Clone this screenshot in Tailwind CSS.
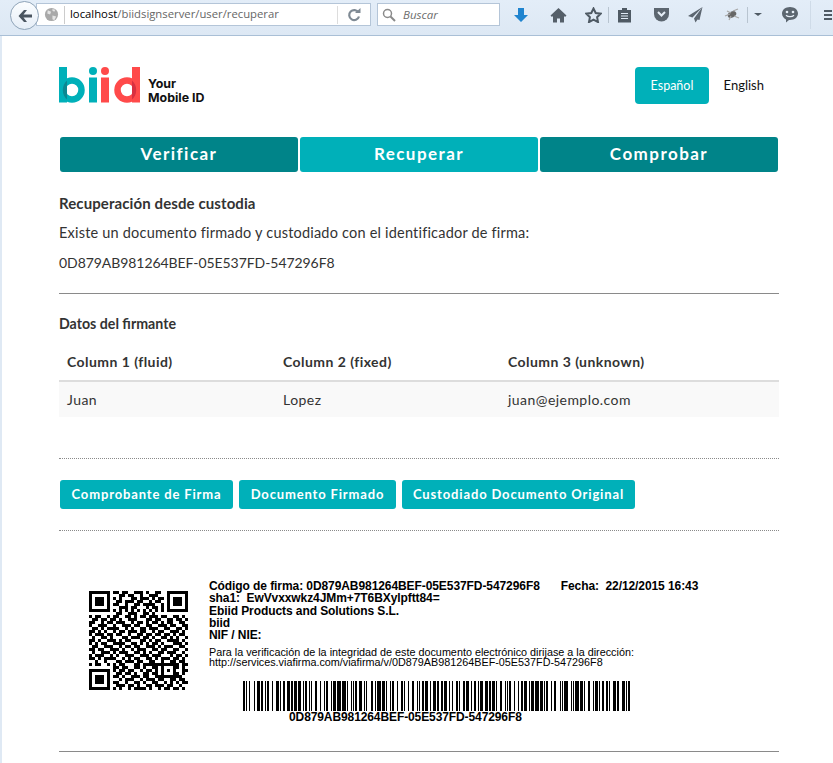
<!DOCTYPE html>
<html lang="es">
<head>
<meta charset="utf-8">
<title>biid</title>
<script src="https://cdn.jsdelivr.net/npm/@tailwindcss/browser@4"></script>
</head>
<body class="bg-white h-[763px] w-[833px] overflow-hidden font-['Lato',sans-serif] text-[#222]">
<!-- browser toolbar -->
<div class="h-[36px] w-[833px] flex items-center bg-gradient-to-b from-[#e3edf8] to-[#dde8f4] border-b border-[#a9bfd6] relative overflow-hidden">
  <div class="absolute left-[10px] top-[1px] w-[29px] h-[29px] rounded-full bg-gradient-to-b from-[#fbfdff] to-[#e6eef7] border border-[#8ea3b8] flex items-center justify-center z-10">
    <svg width="16" height="14" viewBox="0 0 16 14"><path d="M7 1 1.5 7 7 13h3L6.5 8.6H15V5.4H6.5L10 1z" fill="#4a5560"/></svg>
  </div>
  <div class="ml-[36px] mt-[-6px] w-[335px] h-[23px] shrink-0 bg-white border border-[#b4c5d8] flex items-center">
    <svg class="ml-[7px]" width="15" height="15" viewBox="0 0 16 16"><circle cx="8" cy="8" r="7" fill="#a9a9a9"/><path d="M4 3.5 7.5 5 6.5 8 3.5 7zM9 9l4 1-2 4-2-1zM9 2l3 1-1 2-2-1z" fill="#e4e4e4"/></svg>
    <span class="ml-[5px] w-px h-[18px] bg-[#ccc]"></span>
    <span class="ml-[5px] text-[11.300px] font-['Open_Sans'] text-[#666]"><span class="text-black">localhost</span>/biidsignserver/user/recuperar</span>
    <span class="ml-auto w-px h-[18px] bg-[#ddd]"></span>
    <svg class="mx-[9px]" width="14" height="14" viewBox="0 0 14 14"><path d="M11.5 4.5A5 5 0 1 0 12 8.5" fill="none" stroke="#7f8a94" stroke-width="2.2"/><path d="M8 5h5.500V0z" fill="#7f8a94"/></svg>
  </div>
  <div class="ml-[6px] mt-[-6px] w-[123px] h-[23px] shrink-0 bg-white border border-[#b4c5d8] flex items-center">
    <svg class="ml-[4px]" width="14" height="14" viewBox="0 0 14 14"><circle cx="5.500" cy="5.500" r="4" fill="none" stroke="#8a8a8a" stroke-width="1.500"/><path d="m8.500 8.500 4.500 4.500" stroke="#8a8a8a" stroke-width="2"/></svg>
    <span class="ml-[7px] text-[11.500px] italic font-['Open_Sans'] text-[#6d6d6d]">Buscar</span>
  </div>
  <div class="ml-[13px] mt-[-6px] flex items-center h-[24px] shrink-0">
    <svg width="16" height="16" viewBox="0 0 16 16"><path d="M5 1h6v7h4l-7 7-7-7h4z" fill="#1f84cf"/></svg>
    <svg class="ml-[21px]" width="17" height="16" viewBox="0 0 17 16"><path d="M8.500 1 0.500 8.500 2 10l1-1v6.500h4v-4h3v4h4V9l1 1 1.500-1.500z" fill="#555f69"/></svg>
    <svg class="ml-[18px]" width="17" height="16" viewBox="0 0 17 16"><path d="m8.500 1.500 2.200 4.500 5 .7-3.600 3.500.9 4.900-4.500-2.400-4.500 2.400.9-4.900L1.300 6.700l5-.7z" fill="none" stroke="#4f5a64" stroke-width="2"/></svg>
    <span class="ml-[6px] w-px h-[16px] bg-[#b8c4d0]"></span>
    <svg class="ml-[8px]" width="15" height="16" viewBox="0 0 15 16"><path d="M1 3h4V1h5v2h4v12.500H1z" fill="#4f5a64"/><path d="M4 6.500h7M4 9h7M4 11.500h7" stroke="#dfe9f4" stroke-width="1.200"/></svg>
    <svg class="ml-[21px]" width="17" height="15" viewBox="0 0 17 15"><path d="M1 1h15v6a7.500 7.500 0 0 1-15 0z" fill="#5c6670"/><path d="m5 5 3.500 3.500L12 5" fill="none" stroke="#e6eef7" stroke-width="2"/></svg>
    <svg class="ml-[17px]" width="17" height="17" viewBox="0 0 17 17"><path d="M15.500 1 1 10l4.500 1.500L15.500 1 7 12.500l1.500 4 2-3 2 .5z" fill="#5c6670"/></svg>
    <svg class="ml-[20px]" width="16" height="13" viewBox="0 0 16 13"><ellipse cx="8" cy="6.500" rx="4.500" ry="3" fill="#666" transform="rotate(-25 8 6.500)"/><path d="M1 8 6 6M9 3l5-2M10 8l5 2M3 3l4 2M5 12l2-4" stroke="#a8a8a8" stroke-width="1.200"/></svg>
    <span class="ml-[7px] w-px h-[16px] bg-[#b8c4d0]"></span>
    <span class="ml-[6px] w-0 h-0 border-x-[4px] border-x-transparent border-t-[3px] border-t-[#4f5a64]"></span>
    <svg class="ml-[19px]" width="18" height="17" viewBox="0 0 18 17"><path d="M9 1c4.500 0 8 2.800 8 6.500S13.500 14 9 14H8l-3 2.500V13.500C2.800 12.400 1 10.200 1 7.500 1 3.800 4.500 1 9 1z" fill="#5c6670"/><circle cx="6" cy="6" r="1.300" fill="#e6eef7"/><circle cx="12" cy="6" r="1.300" fill="#e6eef7"/><path d="M5 9.300c2 1.800 6 1.800 8 0" fill="none" stroke="#e6eef7" stroke-width="1.300"/></svg>
    <span class="ml-[11px] w-px h-[28px] bg-[#cfdbe8]"></span>
    <span class="ml-[13px] flex flex-col gap-[2px]"><span class="block w-[8px] h-[2px] bg-[#4f5a64]"></span><span class="block w-[8px] h-[2px] bg-[#4f5a64]"></span><span class="block w-[8px] h-[2px] bg-[#4f5a64]"></span></span>
  </div>
</div>

<!-- page -->
<div class="h-[727px] border-l-2 border-[#dfe9f4]">
<div class="w-[720px] ml-[57px]">
  <header class="pt-[31px] h-[101px] flex items-start justify-between">
    <div class="flex items-end">
      <svg width="84" height="37" viewBox="59 67 84 37" class="block">
        <rect x="59" y="67" width="8" height="35.500" fill="#00b0b9"/>
        <circle cx="72" cy="90" r="9.500" fill="none" stroke="#00b0b9" stroke-width="6.500"/>
        <path d="M67 80.500a12.800 12.800 0 0 0 0 19z" fill="#0b8892"/>
        <circle cx="93" cy="71" r="4" fill="#00b0b9"/>
        <rect x="89" y="77.500" width="8" height="25" fill="#00b0b9"/>
        <circle cx="105" cy="71" r="4" fill="#ff4a4a"/>
        <rect x="101" y="77.500" width="8" height="25" fill="#ff4a4a"/>
        <circle cx="127" cy="90" r="9.500" fill="none" stroke="#ff4a4a" stroke-width="6.500"/>
        <rect x="132" y="67" width="8" height="35.500" fill="#ff4a4a"/>
        <path d="M132 80.500a12.800 12.800 0 0 1 0 19z" fill="#d93040"/>
      </svg>
      <div class="ml-[5px] mb-[-1px] text-[12.400px] leading-[14px] font-bold text-[#111] font-['Inter']">Your<br>Mobile ID</div>
    </div>
    <div class="flex items-center mr-[15px]">
      <a class="w-[74px] h-[37px] rounded-[4px] bg-[#00b0b9] text-white text-[12.500px] pt-px flex items-center justify-center">Español</a>
      <a class="w-[55px] text-right text-[13px] pt-px text-[#111]">English</a>
    </div>
  </header>

  <nav class="flex gap-[2px] h-[35px] ml-[1px] w-[718px] text-white text-[17px] font-bold tracking-[1.450px]">
    <a class="flex-1 rounded-[3px] bg-[#008489] flex items-center justify-center pb-[2px]">Verificar</a>
    <a class="flex-1 rounded-[3px] bg-[#00b0b9] flex items-center justify-center pb-[2px]">Recuperar</a>
    <a class="flex-1 rounded-[3px] bg-[#008489] flex items-center justify-center pb-[2px]">Comprobar</a>
  </nav>

  <section class="text-[14.500px] text-[#333]">
    <h2 class="mt-[21px] h-[20px] leading-[20px] text-[15px] tracking-[.1px] font-bold">Recuperación desde custodia</h2>
    <p class="mt-[10px] h-[20px] leading-[20px] tracking-[.2px]">Existe un documento firmado y custodiado con el identificador de firma:</p>
    <p class="mt-[10px] h-[20px] leading-[20px] text-[14px] tracking-[-.06px]">0D879AB981264BEF-05E537FD-547296F8</p>
  </section>
  <hr class="mt-[20px] border-0 border-t border-[#8a8a8a]">

  <h2 class="mt-[20px] h-[20px] leading-[20px] text-[14.200px] font-bold text-[#333]">Datos del firmante</h2>
  <table class="mt-[9px] w-[720px] table-fixed text-[14px] tracking-[.45px] text-[#333]">
    <thead><tr class="h-[38px] border-b-2 border-[#ddd] font-bold">
      <th class="w-[216px] pl-[8px] text-left">Column 1 (fluid)</th>
      <th class="w-[225px] pl-[8px] text-left">Column 2 (fixed)</th>
      <th class="pl-[8px] text-left">Column 3 (unknown)</th>
    </tr></thead>
    <tbody><tr class="h-[36px] bg-[#f9f9f9]">
      <td class="pl-[8px]">Juan</td><td class="pl-[8px]">Lopez</td><td class="pl-[8px]">juan@ejemplo.com</td>
    </tr></tbody>
  </table>
  <hr class="mt-[41px] border-0 border-t border-dotted border-[#8a8a8a]">

  <div class="mt-[21px] ml-[1px] flex gap-[6px] text-white text-[13px] font-bold tracking-[.85px]">
    <a class="w-[173px] h-[29px] rounded-[3px] bg-[#00b0b9] flex items-center justify-center">Comprobante de Firma</a>
    <a class="w-[157px] h-[29px] rounded-[3px] bg-[#00b0b9] flex items-center justify-center">Documento Firmado</a>
    <a class="w-[233px] h-[29px] rounded-[3px] bg-[#00b0b9] flex items-center justify-center">Custodiado Documento Original</a>
  </div>
  <hr class="mt-[21px] border-0 border-t border-dotted border-[#8a8a8a]">

  <!-- signature stamp -->
  <div class="h-[220px] pt-[49px] pl-[30px] flex text-black font-['Liberation_Sans',sans-serif]">
    <svg id="qr" width="99" height="99" viewBox="0 0 33 33" shape-rendering="crispEdges" class="mt-[11px] shrink-0 block"></svg>
    <div class="ml-[21px] w-[500px]">
      <div class="text-[12px] leading-[12.250px] font-bold tracking-[-.08px]">
        <div class="flex"><span>Código de firma: 0D879AB981264BEF-05E537FD-547296F8</span><span class="ml-[21px]">Fecha:&nbsp; 22/12/2015 16:43</span></div>
        <div>sha1:&nbsp; EwVvxxwkz4JMm+7T6BXylpftt84=</div>
        <div>Ebiid Products and Solutions S.L.</div>
        <div>biid</div>
        <div>NIF / NIE:</div>
      </div>
      <div class="mt-[6px] text-[10.800px] leading-[10px]">
        <div>Para la verificación de la integridad de este documento electrónico dirijase a la dirección:</div>
        <div>http://services.viafirma.com/viafirma/v/0D879AB981264BEF-05E537FD-547296F8</div>
      </div>
      <svg id="bar" width="387" height="30" viewBox="0 0 387 30" shape-rendering="crispEdges" class="block mt-[14px] ml-[34px]"></svg>
      <div class="mt-0 ml-[80px] text-[12px] leading-[12px] font-bold tracking-[-.1px]">0D879AB981264BEF-05E537FD-547296F8</div>
    </div>
  </div>
  <hr class="border-0 border-t border-[#8a8a8a]">
</div>
</div>

<script>
(function(){
  var rows=[
  "111111101101100111010011001111111",
  "100000100011011001001110001000001",
  "101110101010001101110101101011101",
  "101110100110111011001011001011101",
  "101110101100100110111100101011101",
  "100000100011101100010110101000001",
  "111111101010101010101010101111111",
  "000000000110011100110100000000000",
  "101100101100110101101110110011010",
  "011011011010011100011011001101101",
  "110010110111001011010110101100110",
  "100111001001110110011001110110011",
  "011010111100101001101110011001101",
  "110101001011011101100101100111010",
  "101110110110010011011011011010110",
  "010011010001101110110100110101001",
  "110100111010110001101011001111010",
  "101011001111001101010110100011101",
  "011001110010110110011101011100110",
  "110110011101001011100110110011001",
  "010011101011100110101001101110010",
  "101110010100111001110111000101101",
  "110101111001010110011010111011010",
  "001001000110111011001100100110110",
  "101100101011000110111111101001011",
  "000000001101100110100110100011010",
  "111111101011011001011010111010011",
  "100000100110110100110110001011010",
  "101110101101001110110011011101100",
  "101110100010111001011101100110110",
  "101110101100100110100110010101011",
  "100000100111011010011011101100100",
  "111111101010010111101001011011010"];
  var g=rows.map(function(r){return r.split("").map(Number)});
  for(var y=0;y<5;y++)for(var x=0;x<5;x++){g[24+y][24+x]=(y==0||y==4||x==0||x==4||(x==2&&y==2))?1:0}
  var d="";
  g.forEach(function(r,y){r.forEach(function(v,x){if(v)d+="M"+x+" "+y+"h1v1h-1z"})});
  var NS="http://www.w3.org/2000/svg";
  var p=document.createElementNS(NS,"path");p.setAttribute("d",d);document.getElementById("qr").appendChild(p);

  var T="212222 222122 222221 121223 121322 131222 122213 122312 132212 221213 221312 231212 112232 122132 122231 113222 123122 123221 223211 221132 221231 213212 223112 312131 311222 321122 321221 312212 322112 322211 212123 212321 232121 111323 131123 131321 112313 132113 132311 211313 231113 231311 112133 112331 132131 113123 113321 133121 313121 211331 231131 213113 213311 213131 311123 311321 331121 312113 312311 332111 314111 221411 431111 111224 111422 121124 121421 141122 141221 112214 112412 122114 122411 142112 142211 241211 221114 413111 241112 134111 111242 121142 121241 114212 124112 124211 411212 421112 421211 212141 214121 412121 111143 111341 131141 114113 114311 411113 411311 113141 114131 311141 411131 211412 211214 211232 2331112".split(" ");
  function B(s){return s.split("").map(function(c){return c.charCodeAt(0)-32})}
  var codes=[104].concat(B("0D879AB"),[99,98,12,64,100],B("BEF-05E537FD-"),[99,54,72,96,100],B("F8"));
  var sum=codes[0];for(var i=1;i<codes.length;i++)sum+=codes[i]*i;
  codes.push(sum%103);codes.push(106);
  var px=0,bd="";
  codes.forEach(function(c){T[c].split("").forEach(function(w,i){w=+w;if(i%2==0)bd+="M"+px+" 0h"+w+"v30h-"+w+"z";px+=w})});
  var b=document.createElementNS(NS,"path");b.setAttribute("d",bd);document.getElementById("bar").appendChild(b);
})();
</script>
</body>
</html>
